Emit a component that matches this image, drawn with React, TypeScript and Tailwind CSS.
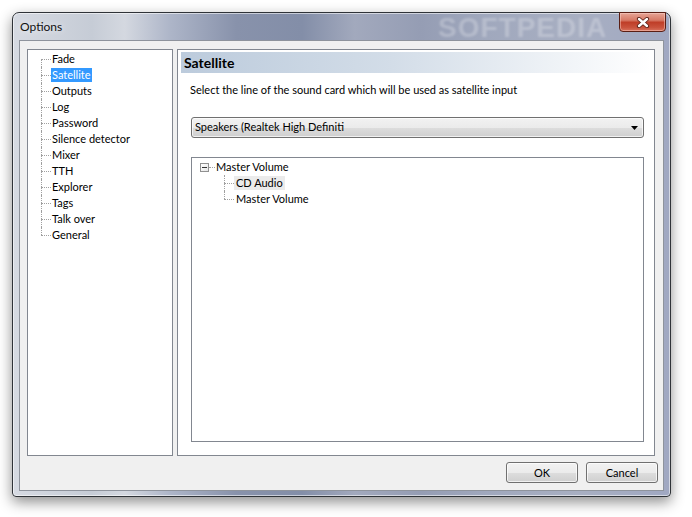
import React from "react";

const items = [
  "Fade",
  "Satellite",
  "Outputs",
  "Log",
  "Password",
  "Silence detector",
  "Mixer",
  "TTH",
  "Explorer",
  "Tags",
  "Talk over",
  "General",
];

function Connector({ first, last }: { first?: boolean; last?: boolean }) {
  return (
    <div className="w-[10px] h-[16px] flex flex-col shrink-0">
      <div
        className={
          first
            ? "h-[8px]"
            : "h-[8px] border-l border-dotted border-[#a0a0a0]"
        }
      />
      <div
        className={
          last
            ? "h-[8px] border-t border-dotted border-[#a0a0a0]"
            : "h-[8px] border-l border-t border-dotted border-[#a0a0a0]"
        }
      />
    </div>
  );
}

function Button({ label }: { label: string }) {
  return (
    <div className="w-[72px] h-[21px] rounded-[3px] border border-[#707070] bg-[linear-gradient(180deg,#f2f2f2_0%,#ebebeb_50%,#dddddd_51%,#cfcfcf_100%)] shadow-[inset_0_0_0_1px_rgba(255,255,255,0.7)] flex items-center justify-center leading-none">
      {label}
    </div>
  );
}

export default function App() {
  return (
    <div className="w-[692px] h-[517px] bg-white overflow-hidden font-['Segoe_UI',Lato,sans-serif] text-[11px] text-black">
      <div className="ml-[12px] mt-[12px] w-[659px] h-[485px] rounded-t-[7px] rounded-b-[4px] border border-[#2f3338] bg-[linear-gradient(90deg,#d6dae2_0%,#c6ccd6_12%,#d4d8e0_17%,#adb5c8_24%,#8892ab_34%,#838ea8_44%,#a2a9bd_52%,#959db4_62%,#a0a8bd_72%,#a8afc2_86%,#a0a8c2_100%)] shadow-[0_5px_14px_rgba(0,0,0,0.45),inset_0_0_0_1px_rgba(255,255,255,0.55)] flex flex-col relative">
        {/* title bar */}
        <div className="h-[27px] shrink-0 flex items-center pl-[7px] relative">
          <span className="text-[12px] text-[#111] [text-shadow:0_0_6px_rgba(255,255,255,0.9)]">
            Options
          </span>
          <span className="absolute left-[425px] top-[1px] text-[28px] leading-none font-bold tracking-[1px] text-white/25 blur-[1px] font-['Liberation_Sans',sans-serif]">
            SOFTPEDIA
          </span>
          <div className="absolute top-[-1px] right-[4px] w-[47px] h-[20px] rounded-b-[4px] border border-[#5a1e14] bg-[linear-gradient(180deg,#e6a496_0%,#d77a66_40%,#bf3e28_52%,#c9523c_80%,#d8735e_100%)] shadow-[inset_0_0_0_1px_rgba(255,220,210,0.45)] flex items-center justify-center">
            <svg width="14" height="11" viewBox="0 0 14 11">
              <path
                d="M3 2 L11 9 M11 2 L3 9"
                stroke="#5b2218"
                strokeWidth="4.2"
                strokeLinecap="round"
              />
              <path
                d="M3 2 L11 9 M11 2 L3 9"
                stroke="#ffffff"
                strokeWidth="2.4"
                strokeLinecap="round"
              />
            </svg>
          </div>
        </div>

        {/* client area */}
        <div className="flex-1 ml-[6px] mr-[6px] mb-[5px] border border-[#8e939c] bg-[#f0f0f0] flex flex-col pl-[7px] pr-[5px] pt-[8px] pb-[7px]">
          <div className="flex gap-[4px] h-[407px] mr-[3px]">
            {/* left tree */}
            <div className="w-[146px] border border-[#828790] bg-white pt-[1px] pl-[13px]">
              {items.map((it, i) => (
                <div key={it} className="flex items-center h-[16px]">
                  <Connector first={i === 0} last={i === items.length - 1} />
                  <span
                    className={
                      i === 1
                        ? "h-[14px] leading-[14px] px-[1px] bg-[#3399ff] text-white"
                        : "h-[14px] leading-[14px] px-[1px]"
                    }
                  >
                    {it}
                  </span>
                </div>
              ))}
            </div>

            {/* right panel */}
            <div className="flex-1 border border-[#828790] bg-white flex flex-col">
              <div className="mt-[2px] mx-[3px] h-[21px] pl-[3px] flex items-center font-bold text-[14px] bg-[linear-gradient(90deg,#bccbdc_0%,#d3dde8_45%,#ffffff_100%)]">
                Satellite
              </div>
              <div className="ml-[12px] mt-[9px] leading-[16px]">
                Select the line of the sound card which will be used as satellite input
              </div>
              <div className="ml-[13px] mr-[10px] mt-[19px] h-[21px] rounded-[3px] border border-[#707070] bg-[linear-gradient(180deg,#f2f2f2_0%,#ebebeb_50%,#dddddd_51%,#cfcfcf_100%)] shadow-[inset_0_0_0_1px_rgba(255,255,255,0.7)] flex items-center pl-[3px] pr-[5px]">
                <span className="flex-1">Speakers (Realtek High Definiti</span>
                <svg width="7" height="4" viewBox="0 0 7 4">
                  <path d="M0 0 H7 L3.5 4 Z" fill="#000" />
                </svg>
              </div>
              <div className="ml-[13px] mr-[10px] mt-[19px] mb-[13px] flex-1 border border-[#828790] bg-white pt-[1px] pl-[8px]">
                <div className="flex items-center h-[16px]">
                  <div className="w-[9px] h-[9px] border border-[#919191] bg-[linear-gradient(135deg,#ffffff_0%,#e6e6e6_100%)] flex items-center justify-center shrink-0">
                    <div className="w-[5px] h-[1px] bg-[#333]" />
                  </div>
                  <div className="w-[6px] border-t border-dotted border-[#a0a0a0]" />
                  <span className="px-[1px] leading-[14px]">Master Volume</span>
                </div>
                <div className="pl-[24px]">
                  <div className="flex items-center h-[16px]">
                    <Connector />
                    <span className="h-[14px] leading-[14px] px-[2px] bg-[#ebebeb]">
                      CD Audio
                    </span>
                  </div>
                  <div className="flex items-center h-[16px]">
                    <Connector last />
                    <span className="h-[14px] leading-[14px] px-[2px]">
                      Master Volume
                    </span>
                  </div>
                </div>
              </div>
            </div>
          </div>

          <div className="mt-[6px] flex justify-end gap-[8px]">
            <Button label="OK" />
            <Button label="Cancel" />
          </div>
        </div>
      </div>
    </div>
  );
}
